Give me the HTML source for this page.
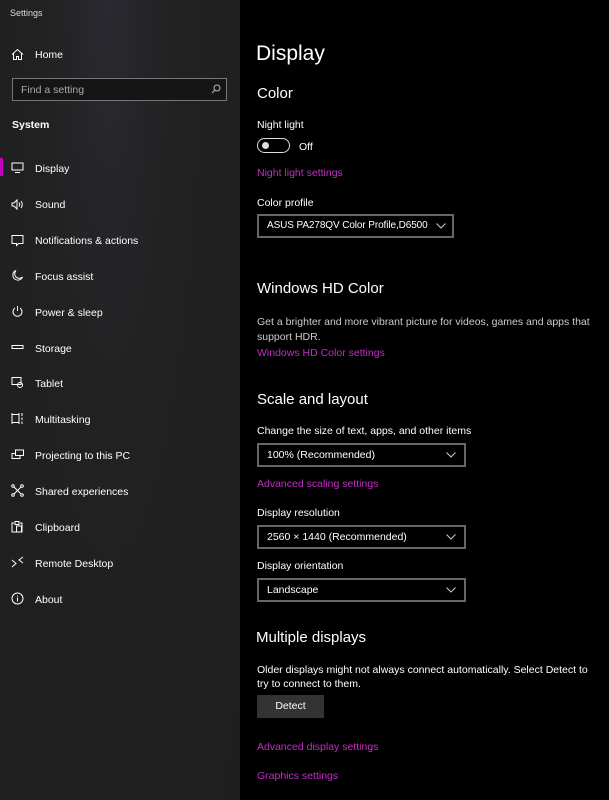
<!DOCTYPE html>
<html><head><meta charset="utf-8"><style>
*{margin:0;padding:0;box-sizing:border-box}
body{width:609px;height:800px;background:#000;font-family:"Liberation Sans",sans-serif;color:#fff;position:relative;overflow:hidden;font-size:10.5px}
.sb{position:absolute;left:0;top:0;width:240px;height:800px;background:radial-gradient(ellipse at 110px 0px,#292930 0%,#212121 40%,#1f1f1f 100%)}
.a{position:absolute;white-space:nowrap}
.it{position:absolute;left:35px;font-size:10.5px;color:#fff}
.ic{position:absolute;left:11px;width:13px;height:13px}
.link{color:#c22fc2}
.dd{position:absolute;border:2px solid #666;height:24px;padding-left:8px;line-height:20px;font-size:10.5px}
.dd svg{position:absolute;right:8px;top:7px}
h2{font-weight:normal;font-size:15px;position:absolute}
</style></head><body>
<div class="sb">
<div class="a" style="left:10px;top:8px;font-size:9px;color:#ddd">Settings</div>
<svg class="ic" style="top:48px" viewBox="0 0 13 13" fill="none" stroke="#fff" stroke-width="1"><path d="M1 6.5L6.5 1.5 12 6.5M2.5 5v6.5h3v-3h2v3h3V5"/></svg>
<div class="it" style="top:49px">Home</div>
<div class="a" style="left:12px;top:78px;width:215px;height:23px;border:1px solid #777;background:#151515"></div>
<div class="a" style="left:21px;top:84px;color:#aaa">Find a setting</div>
<svg class="a" style="left:211px;top:84px" width="10" height="10" viewBox="0 0 10 10" fill="none" stroke="#bbb"><circle cx="6" cy="4" r="3"/><path d="M4 6L1 9"/></svg>
<div class="a" style="left:12px;top:119px;font-weight:bold;font-size:10.5px">System</div>
<div class="a" style="left:0;top:158px;width:3px;height:18px;background:#c000c0"></div>
<svg class="ic" style="top:161px" viewBox="0 0 13 13" fill="none" stroke="#fff"><rect x="1" y="2" width="11" height="7"/><path d="M4 11.5h5"/></svg>
<div class="it" style="top:163px">Display</div>
<svg class="ic" style="top:198px" viewBox="0 0 13 13" fill="none" stroke="#fff"><path d="M1 5h2l3-3v9L3 8H1z M8 4.5q1.5 2 0 4 M10 3q2.5 3.5 0 7"/></svg>
<div class="it" style="top:199px">Sound</div>
<svg class="ic" style="top:234px" viewBox="0 0 13 13" fill="none" stroke="#fff"><path d="M1 1.5h11v8H7.5l-2 2v-2H1z"/></svg>
<div class="it" style="top:235px">Notifications &amp; actions</div>
<svg class="ic" style="top:269px" viewBox="0 0 13 13" fill="none" stroke="#fff"><path d="M5 1.5A5 5 0 1 0 11.5 8 4.5 4.5 0 0 1 5 1.5z"/></svg>
<div class="it" style="top:271px">Focus assist</div>
<svg class="ic" style="top:305px" viewBox="0 0 13 13" fill="none" stroke="#fff"><path d="M6.5 1v5M4 3A4.5 4.5 0 1 0 9 3"/></svg>
<div class="it" style="top:307px">Power &amp; sleep</div>
<svg class="ic" style="top:341px" viewBox="0 0 13 13" fill="none" stroke="#fff"><rect x="1" y="4.5" width="11" height="3"/></svg>
<div class="it" style="top:343px">Storage</div>
<svg class="ic" style="top:376px" viewBox="0 0 13 13" fill="none" stroke="#fff"><rect x="1" y="1.5" width="9" height="7"/><circle cx="9" cy="9" r="2.5"/></svg>
<div class="it" style="top:378px">Tablet</div>
<svg class="ic" style="top:412px" viewBox="0 0 13 13" fill="none" stroke="#fff"><path d="M1 1v11M8 1v11M1 2.5h7M1 10.5h7M11 1v3M11 5.5v2.5M11 9.5v2.5"/></svg>
<div class="it" style="top:414px">Multitasking</div>
<svg class="ic" style="top:448px" viewBox="0 0 13 13" fill="none" stroke="#fff"><rect x="4.5" y="2" width="8" height="5.5"/><path d="M4.5 5.5H1v5h8v-3"/></svg>
<div class="it" style="top:450px">Projecting to this PC</div>
<svg class="ic" style="top:484px" viewBox="0 0 13 13" fill="none" stroke="#fff"><path d="M3 3l7 7M10 3l-7 7"/><circle cx="2" cy="2" r="1.3"/><circle cx="11" cy="2" r="1.3"/><circle cx="2" cy="11" r="1.3"/><circle cx="11" cy="11" r="1.3"/></svg>
<div class="it" style="top:486px">Shared experiences</div>
<svg class="ic" style="top:520px" viewBox="0 0 13 13" fill="none" stroke="#fff"><path d="M3 3H1v9h10V3H9M4 1.5h4v3H4z"/><rect x="5.5" y="6" width="5" height="6"/></svg>
<div class="it" style="top:522px">Clipboard</div>
<svg class="ic" style="top:556px" viewBox="0 0 13 13" fill="none" stroke="#fff"><path d="M1 4l4 3.5L1 11M12 1L8 4l4 3"/></svg>
<div class="it" style="top:558px">Remote Desktop</div>
<svg class="ic" style="top:592px" viewBox="0 0 13 13" fill="none" stroke="#fff"><circle cx="6.5" cy="6.5" r="5.5"/><path d="M6.5 5.5v4M6.5 3.5v1"/></svg>
<div class="it" style="top:594px">About</div>
</div>

<div class="a" style="left:256px;top:42px;font-size:21px">Display</div>
<h2 style="left:257px;top:85px">Color</h2>
<div class="a" style="left:257px;top:119px">Night light</div>
<div class="a" style="left:257px;top:138px;width:33px;height:15px;border:1.5px solid #ddd;border-radius:8px"></div>
<div class="a" style="left:262px;top:142px;width:7px;height:7px;border-radius:50%;background:#ddd"></div>
<div class="a" style="left:299px;top:141px">Off</div>
<div class="a link" style="left:257px;top:167px">Night light settings</div>
<div class="a" style="left:257px;top:197px">Color profile</div>
<div class="dd" style="left:257px;top:214px;width:197px;font-size:10px;letter-spacing:-0.1px">ASUS PA278QV Color Profile,D6500<svg width="10" height="6" viewBox="0 0 10 6" fill="none" stroke="#ccc" style="background:#000;right:6px"><path d="M0.5 0.5L5 5 9.5 0.5"/></svg></div>

<h2 style="left:257px;top:280px">Windows HD Color</h2>
<div class="a" style="left:257px;top:315px;color:#ccc;line-height:15px;white-space:normal;width:345px">Get a brighter and more vibrant picture for videos, games and apps that support HDR.</div>
<div class="a link" style="left:257px;top:347px">Windows HD Color settings</div>

<h2 style="left:257px;top:391px">Scale and layout</h2>
<div class="a" style="left:257px;top:425px">Change the size of text, apps, and other items</div>
<div class="dd" style="left:257px;top:443px;width:209px">100% (Recommended)<svg width="10" height="6" viewBox="0 0 10 6" fill="none" stroke="#ccc"><path d="M0.5 0.5L5 5 9.5 0.5"/></svg></div>
<div class="a link" style="left:257px;top:478px">Advanced scaling settings</div>
<div class="a" style="left:257px;top:507px">Display resolution</div>
<div class="dd" style="left:257px;top:525px;width:209px">2560 × 1440 (Recommended)<svg width="10" height="6" viewBox="0 0 10 6" fill="none" stroke="#ccc"><path d="M0.5 0.5L5 5 9.5 0.5"/></svg></div>
<div class="a" style="left:257px;top:560px">Display orientation</div>
<div class="dd" style="left:257px;top:578px;width:209px">Landscape<svg width="10" height="6" viewBox="0 0 10 6" fill="none" stroke="#ccc"><path d="M0.5 0.5L5 5 9.5 0.5"/></svg></div>

<h2 style="left:256px;top:629px">Multiple displays</h2>
<div class="a" style="left:257px;top:663px;line-height:14px;white-space:normal;width:345px">Older displays might not always connect automatically. Select Detect to try to connect to them.</div>
<div class="a" style="left:257px;top:695px;width:67px;height:23px;background:#333;text-align:center;line-height:23px">Detect</div>
<div class="a link" style="left:257px;top:741px">Advanced display settings</div>
<div class="a link" style="left:257px;top:770px">Graphics settings</div>
</body></html>
